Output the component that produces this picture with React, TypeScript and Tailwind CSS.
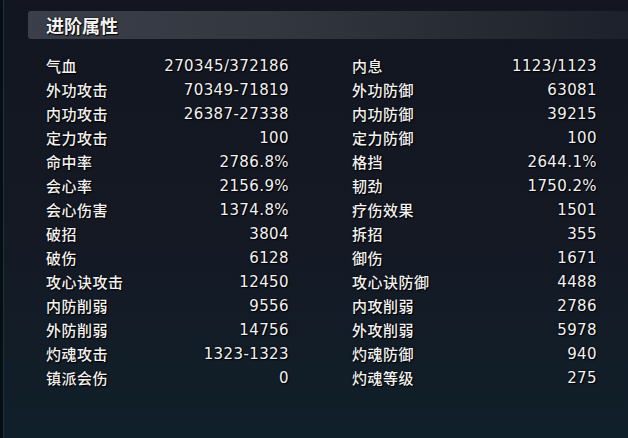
const left: [string, string][] = [
  ["气血", "270345/372186"],
  ["外功攻击", "70349-71819"],
  ["内功攻击", "26387-27338"],
  ["定力攻击", "100"],
  ["命中率", "2786.8%"],
  ["会心率", "2156.9%"],
  ["会心伤害", "1374.8%"],
  ["破招", "3804"],
  ["破伤", "6128"],
  ["攻心诀攻击", "12450"],
  ["内防削弱", "9556"],
  ["外防削弱", "14756"],
  ["灼魂攻击", "1323-1323"],
  ["镇派会伤", "0"],
];

const right: [string, string][] = [
  ["内息", "1123/1123"],
  ["外功防御", "63081"],
  ["内功防御", "39215"],
  ["定力防御", "100"],
  ["格挡", "2644.1%"],
  ["韧劲", "1750.2%"],
  ["疗伤效果", "1501"],
  ["拆招", "355"],
  ["御伤", "1671"],
  ["攻心诀防御", "4488"],
  ["内攻削弱", "2786"],
  ["外攻削弱", "5978"],
  ["灼魂防御", "940"],
  ["灼魂等级", "275"],
];

function StatColumn({ rows }: { rows: [string, string][] }) {
  return (
    <div className="flex flex-col">
      {rows.map(([k, v]) => (
        <div key={k} className="flex h-[24px] items-center justify-between">
          <span className="font-['Noto_Sans_CJK_SC',sans-serif] text-[15px] font-medium tracking-[0.5px]">{k}</span>
          <span className="font-['DejaVu_Sans',sans-serif] text-[15px] tracking-[0.4px]">{v}</span>
        </div>
      ))}
    </div>
  );
}

export default function App() {
  return (
    <div className="relative h-[438px] w-[628px] overflow-hidden bg-[linear-gradient(180deg,#131621_0%,#141924_55%,#10202a_100%)] text-[#f2f2f2] [text-shadow:0_0_2px_#000,1px_1px_1px_#000]">
      <div className="absolute bottom-0 left-0 top-0 w-[4px] border-r border-[#0b3a40] bg-[#0a0c12]" />
      <div className="pt-[11px]">
        <div className="ml-[28px] flex h-[28px] items-center rounded-l-[3px] bg-[linear-gradient(90deg,#3b3f4b_0%,#33373f_40%,#1d212b_100%)] pl-[18px]">
          <span className="font-['Noto_Sans_CJK_SC',sans-serif] text-[18px] font-bold">进阶属性</span>
        </div>
      </div>
      <div className="grid grid-cols-[243px_245px] gap-x-[63px] pl-[46px] pt-[15px]">
        <StatColumn rows={left} />
        <StatColumn rows={right} />
      </div>
    </div>
  );
}
